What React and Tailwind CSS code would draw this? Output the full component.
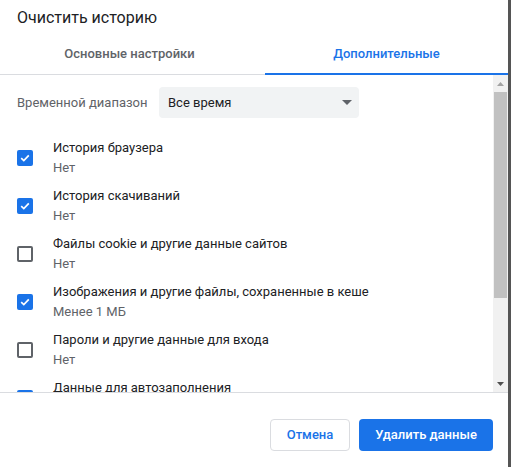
const items = [
  { label: "История браузера", sub: "Нет", checked: true },
  { label: "История скачиваний", sub: "Нет", checked: true },
  { label: "Файлы cookie и другие данные сайтов", sub: "Нет", checked: false },
  { label: "Изображения и другие файлы, сохраненные в кеше", sub: "Менее 1 МБ", checked: true },
  { label: "Пароли и другие данные для входа", sub: "Нет", checked: false },
  { label: "Данные для автозаполнения", sub: "Нет", checked: true },
];

function Checkbox({ checked }) {
  if (checked) {
    return (
      <div className="w-4 h-4 rounded-[2px] bg-[#1a73e8] flex items-center justify-center">
        <svg width="12" height="12" viewBox="0 0 12 12">
          <path d="M2.2 6.2 L4.8 8.6 L9.8 3.4" fill="none" stroke="white" strokeWidth="1.7" />
        </svg>
      </div>
    );
  }
  return <div className="w-4 h-4 rounded-[2px] border-2 border-[#5f6368]" />;
}

export default function App() {
  return (
    <div
      className="w-[511px] h-[467px] flex bg-white overflow-hidden"
      style={{ fontFamily: "Roboto, 'Noto Sans', sans-serif" }}
    >
      <div className="w-[508px] h-full flex flex-col">
        <div className="h-[34px] pl-[17px] pt-[8px] text-[16px] leading-[20px] text-[#202124]">
          Очистить историю
        </div>

        <div className="h-[41px] flex border-b border-[#dadce0] text-[13px] font-medium">
          <div className="w-[265px] flex items-center justify-center text-[#5f6368] pr-[6px]">
            Основные настройки
          </div>
          <div className="flex-1 flex items-center justify-center text-[#1a73e8] border-b-2 border-[#1a73e8] mb-[-1px] pt-[1px]">
            Дополнительные
          </div>
        </div>

        <div className="h-[318px] flex border-b border-[#dadce0]">
          <div className="flex-1 overflow-hidden pt-[12px] pl-[17px] text-[13px]">
            <div className="flex items-center h-[31px]">
              <div className="w-[142px] text-[#5f6368]">Временной диапазон</div>
              <div className="w-[200px] h-[31px] rounded-[4px] bg-[#f1f3f4] flex items-center justify-between pl-[9px] pr-[7px] text-[#202124]">
                <span>Все время</span>
                <svg width="10" height="5" viewBox="0 0 10 5">
                  <path d="M0 0 L10 0 L5 5 Z" fill="#5f6368" />
                </svg>
              </div>
            </div>

            <div className="flex flex-col gap-[8px] pt-[20px]">
              {items.map((it) => (
                <div key={it.label} className="flex items-center h-[40px]">
                  <div className="w-[36px]">
                    <Checkbox checked={it.checked} />
                  </div>
                  <div className="flex flex-col leading-[20px]">
                    <span className="text-[#202124]">{it.label}</span>
                    <span className="text-[#5f6368]">{it.sub}</span>
                  </div>
                </div>
              ))}
            </div>
          </div>

          <div className="w-[15px] h-full bg-[#f1f1f1] flex flex-col items-center">
            <div className="h-[17px] flex items-center justify-center">
              <svg width="7" height="4" viewBox="0 0 7 4">
                <path d="M0 4 L7 4 L3.5 0 Z" fill="#a3a3a3" />
              </svg>
            </div>
            <div className="w-[13px] h-[206px] bg-[#c1c1c1]" />
            <div className="flex-1" />
            <div className="h-[17px] flex items-center justify-center">
              <svg width="7" height="4" viewBox="0 0 7 4">
                <path d="M0 0 L7 0 L3.5 4 Z" fill="#505050" />
              </svg>
            </div>
          </div>
        </div>

        <div className="flex-1 flex justify-end items-start pt-[26px] pr-[15px] gap-[9px] text-[13px] font-medium">
          <button className="w-[80px] h-[32px] rounded-[4px] border border-[#dadce0] text-[#1a73e8] bg-white">
            Отмена
          </button>
          <button className="w-[134px] h-[32px] rounded-[4px] bg-[#1a73e8] text-white">
            Удалить данные
          </button>
        </div>
      </div>
      <div className="w-[3px] h-full bg-[#555555]" />
    </div>
  );
}
